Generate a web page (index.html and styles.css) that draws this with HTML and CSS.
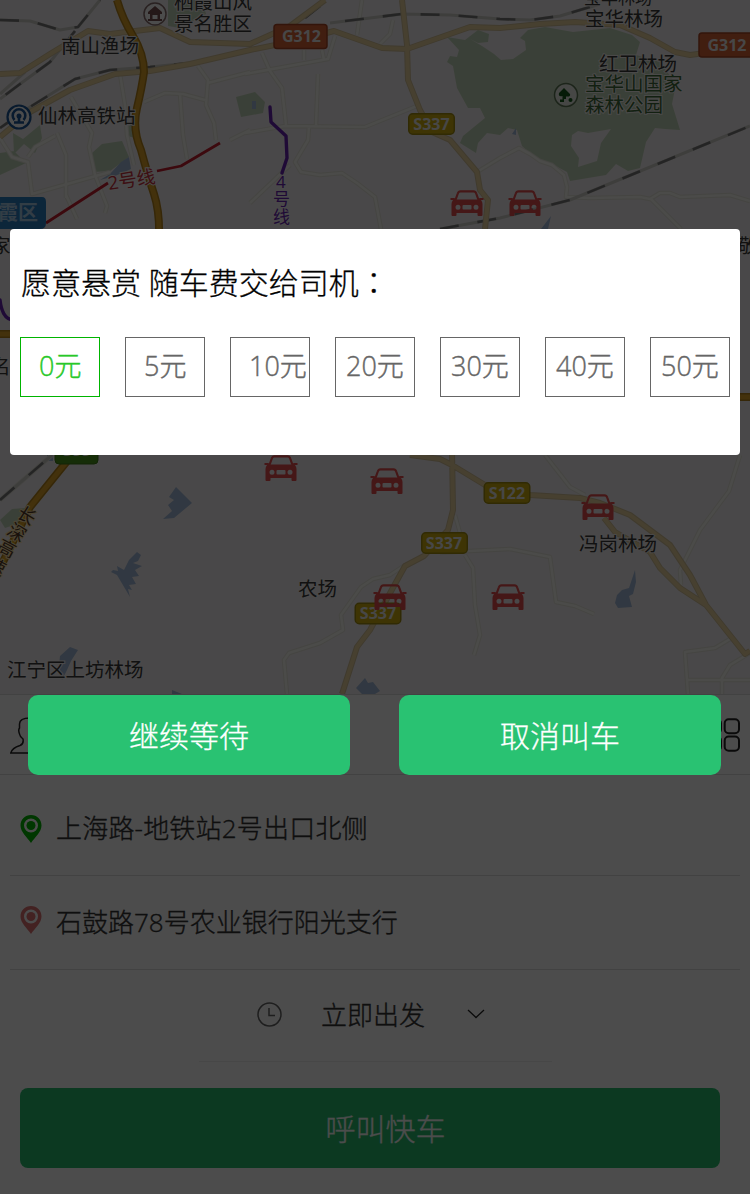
FILE: index.html
```html
<!DOCTYPE html>
<html lang="zh-CN">
<head>
<meta charset="utf-8">
<title>呼叫快车</title>
<link rel="stylesheet" href="styles.css">
</head>
<body>
<div class="screen">
  <svg class="map" width="750" height="694" viewBox="0 0 750 694">
    <defs>
      <g id="car">
        <path d="M5 10 7.3 3.500Q8 1.300 10 1.300H23Q25 1.300 25.700 3.500L28 10" fill="none" stroke="#e84e4e" stroke-width="2.200"/>
        <path fill="#e84e4e" fill-rule="evenodd" d="M0 8H4L5 9.500H28L29 8H33V10H30.500Q32 12 32 14V25Q32 26 31 26H28Q27 26 27 25V23H6V25Q6 26 5 26H2Q1 26 1 25V14Q1 12 2.500 10H0ZM7.500 14.700A2.500 2.500 0 1 0 7.500 19.700A2.500 2.500 0 1 0 7.500 14.700ZM25.500 14.700A2.500 2.500 0 1 0 25.500 19.700A2.500 2.500 0 1 0 25.500 14.700ZM13 15H20Q21 15 21 16V18.500Q21 19.500 20 19.500H13Q12 19.500 12 18.500V16Q12 15 13 15Z"/>
      </g>
      <g id="s-shield"><rect x=".75" y=".75" width="45.500" height="20.500" rx="4" fill="#cfb010" stroke="#a08c10" stroke-width="1.500"/></g>
    </defs>
    <rect width="750" height="694" fill="#f6f1f3"/>

    <g class="green">
      <path d="M447 37 465 40 478 30 489 34 488 42 478 43 470 39 482 46 494 54 501 60 513 59 526 50 525 41 520 38 528 30 545 27 573 32 610 28 632 35 640 42 636 55 660 62 676 84 672 104 680 130 665 129 655 128 646 142 640 168 628 171 616 164 606 175 570 181 567 172 550 163 535 158 522 146 517 130 508 128 500 135 487 133 478 143 476 153 460 143 463 136 485 118 480 108 468 108 457 88 453 66 447 62 450 56 457 57 459 50Z"/>
      <path d="M92 153 102 144 122 141 129 157 110 171 93 172Z"/>
      <path d="M0 153 14 151 26 163 0 175ZM13 133 23 139 40 125 42 138 35 153 24 144 14 154ZM125 128 134 123 136 138 127 136ZM236 97 255 92 265 102 263 113 241 117ZM168 0H202L206 14 180 28 168 26Z"/>
      <path d="M0 520 12 509 25 508 20 523 5 528Z"/>
    </g>
    <path fill="#f6f1f3" d="M572 135 578 131 588 133 611 129 601 143 597 161 578 167 579 158 571 146Z"/>
    <g class="water">
      <path d="M100 180 110 174 121 162 129 157 131 169 115 176ZM541 229 551 216 548 229ZM512 134 516 128 516 135ZM252 101h4v8h-4z"/>
      <path d="M176 487 192 503 174 518 163 519 172 511 168 505 174 500 169 497Z"/>
      <path d="M137 552 141 555 138 561 133 563 142 566 135 570 139 576 132 577 136 584 129 585 132 590 128 589 130 597 117 575 111 572 113 570 118 571 117 566 124 570 129 560Z"/>
      <path d="M635 570 636 582 633 594 629 596 632 607 618 608 615 603 617 595 622 590 629 588Z"/>
      <path d="M70 647 78 650 71 661 67 670 62 680 59 665 60 656ZM172 690 182 694H172ZM356 688 365 678 368 683 373 682 380 691 375 694H362ZM47 455h6v6h-6z"/>
    </g>

    <g class="minor-case">
      <path d="M120 74 125 105 127 135 134 165M71 97 92 133 89 147 95 175 107 206 105 213M57 133 66 155 66 198M28 157 35 147 55 136M0 138 12 157 28 162 32 194 110 172M66 195 77 219M144 102 165 93 183 94 205 100M180 94 183 135 187 159M198 66 208 80 206 105 214 123 216 140M208 83 250 72M230 140 250 130M245 74 328 59 335 36M262 53 270 71 282 88 286 125M318 74 316 125M362 0 357 35M393 20 390 34 380 44M245 133 285 126 365 127 417 106M309 127 308 140 295 162 301 172 320 175 342 173 357 183 375 197 381 229M290 165 250 203M304 50V60M322 50 324 60M477 172 500 158 519 148 530 154 540 161 552 165 564 175 567 187 566 197 590 198 640 197 650 199 660 193 670 193 680 197 730 195 750 201M650 198 681 229"/>
      <path d="M545 455 570 487 585 495M740 455 729 491 700 530 680 570 681 585M455 515 462 540M440 553 470 551 510 549 550 557 556 602 575 606 594 614M465 555 473 568 475 605 480 635 474 655M405 565 390 575 373 579 361 587 341 615 343 630 320 643 289 653 284 660 287 694M730 639 715 648 685 652 688 694M688 680H750M750 653 730 665 722 678 722 694M0 500 52 455"/>
    </g>
    <g class="minor">
      <path d="M120 74 125 105 127 135 134 165M71 97 92 133 89 147 95 175 107 206 105 213M57 133 66 155 66 198M28 157 35 147 55 136M0 138 12 157 28 162 32 194 110 172M66 195 77 219M144 102 165 93 183 94 205 100M180 94 183 135 187 159M198 66 208 80 206 105 214 123 216 140M208 83 250 72M230 140 250 130M245 74 328 59 335 36M262 53 270 71 282 88 286 125M318 74 316 125M362 0 357 35M393 20 390 34 380 44M245 133 285 126 365 127 417 106M309 127 308 140 295 162 301 172 320 175 342 173 357 183 375 197 381 229M290 165 250 203M304 50V60M322 50 324 60M477 172 500 158 519 148 530 154 540 161 552 165 564 175 567 187 566 197 590 198 640 197 650 199 660 193 670 193 680 197 730 195 750 201M650 198 681 229"/>
      <path d="M545 455 570 487 585 495M740 455 729 491 700 530 680 570 681 585M455 515 462 540M440 553 470 551 510 549 550 557 556 602 575 606 594 614M465 555 473 568 475 605 480 635 474 655M405 565 390 575 373 579 361 587 341 615 343 630 320 643 289 653 284 660 287 694M730 639 715 648 685 652 688 694M688 680H750M750 653 730 665 722 678 722 694M0 500 52 455"/>
    </g>

    <g class="rail">
      <path d="M0 20 30 21 60 30 78 27 100 0M75 31 50 62 20 84 0 99M0 128 30 107 75 79 110 70 150 67 190 63M330 23 370 18 402 14 450 15 500 19 530 20 560 16 600 4M0 94 25 72M440 229 500 218 570 200 750 126M0 500 52 455"/>
    </g>
    <g class="rail-dash">
      <path d="M0 20 30 21 60 30 78 27 100 0M75 31 50 62 20 84 0 99M0 128 30 107 75 79 110 70 150 67 190 63M345 21 370 18 402 14 450 15 500 19 530 20 560 16 600 4M440 229 500 218 570 200 750 126M0 500 52 455M305 18 325 2"/>
    </g>

    <g class="road-case">
      <path d="M0 74 20 73 50 54 88 31 110 34 135 31 160 28 190 42 250 44 290 26 325 0M0 137 30 112 70 90 115 74 150 71 190 64 250 50 300 40 334 31 382 48 407 49 470 27 500 28 540 24 575 22 620 25 650 38 675 52 690 55 705 53M402 0 407 45 408 80 420 110 432 132 450 140 477 172 480 190 488 200 485 229"/>
      <path d="M410 455 440 459 452 465 485 485 530 495 580 498 600 503 630 515 670 545 690 575 706 605 745 654 750 651M604 518 615 532 650 552 660 568 680 588 706 605M452 450 453 510 448 530 424 556 405 566 395 584 370 630 357 647 342 694"/>
    </g>
    <g class="road">
      <path d="M0 74 20 73 50 54 88 31 110 34 135 31 160 28 190 42 250 44 290 26 325 0M0 137 30 112 70 90 115 74 150 71 190 64 250 50 300 40 334 31 382 48 407 49 470 27 500 28 540 24 575 22 620 25 650 38 675 52 690 55 705 53M402 0 407 45 408 80 420 110 432 132 450 140 477 172 480 190 488 200 485 229"/>
      <path d="M410 455 440 459 452 465 485 485 530 495 580 498 600 503 630 515 670 545 690 575 706 605 745 654 750 651M604 518 615 532 650 552 660 568 680 588 706 605M452 450 453 510 448 530 424 556 405 566 395 584 370 630 357 647 342 694"/>
    </g>
    <g class="highway-case"><path d="M117 0Q122 18 133 36T144 72Q142 87 137 108T141 150Q148 176 154 194T159 240M68 460 30 507 0 568M0 334H12M738 397H750"/></g>
    <g class="highway"><path d="M117 0Q122 18 133 36T144 72Q142 87 137 108T141 150Q148 176 154 194T159 240M68 460 30 507 0 568M0 334H12M738 397H750"/></g>

    <path class="metro-red" d="M46 223 108 183M157 171 181 166 220 143"/>
    <path class="metro-purple" d="M270 107 271 122 286 136 287 158 282 173M0 300Q2 318 12 320"/>

    <g class="label">
      <text x="174" y="9">栖霞山风</text>
      <text x="174" y="31">景名胜区</text>
      <text x="61" y="53">南山渔场</text>
      <text x="38" y="123">仙林高铁站</text>
      <text x="584" y="4" font-size="17">宝华林场</text>
      <text x="585" y="26">宝华林场</text>
      <text x="599" y="71">红卫林场</text>
      <text x="579" y="551">冯岗林场</text>
      <text x="298" y="596">农场</text>
      <text x="7" y="677">江宁区上坊林场</text>
      <text x="-9" y="374">名</text>
      <text x="-9" y="253">家</text>
      <text x="738" y="253">敬</text>
    </g>
    <g class="label label-green">
      <text x="585" y="91">宝华山国家</text>
      <text x="585" y="112">森林公园</text>
    </g>
    <text class="label label-red" transform="translate(109 190) rotate(-9)">2号线</text>
    <g class="label label-purple">
      <text x="276" y="188">4</text>
      <text x="273" y="205">号</text>
      <text x="273" y="223">线</text>
    </g>
    <g class="label label-road">
      <text transform="translate(27 515) rotate(32)" x="-9" y="7">长</text>
      <text transform="translate(17 532) rotate(32)" x="-9" y="7">深</text>
      <text transform="translate(7 548) rotate(28)" x="-9" y="7">高</text>
      <text transform="translate(-3 566) rotate(28)" x="-9" y="7">速</text>
    </g>

    <g>
      <circle cx="155" cy="14" r="11" fill="#fff" stroke="#8a7070" stroke-width="1.500"/>
      <path fill="#7a5050" d="M148 12 155 6 162 12V14H160V19H162V21H148V19H150V14H148ZM152.500 15V19H157.500V15Z" fill-rule="evenodd"/>
      <circle cx="566" cy="95" r="11.500" fill="#e9efe6" stroke="#5f7a58" stroke-width="1.500"/>
      <path fill="#175c1c" d="M564 88 570 94Q571 97 566 96.500V99H564V102H560V99.500H562.500V96Q558 97 559 93Z"/>
      <circle cx="570.500" cy="100" r="2" fill="#175c1c"/>
      <circle cx="19" cy="117" r="11.500" fill="#fff" stroke="#1c5799" stroke-width="2.200"/>
      <path d="M14 122.500H24M19 122V117M14.500 120A6.300 6.300 0 1 1 23.500 120" fill="none" stroke="#1c5799" stroke-width="2.600"/>
      <circle cx="19" cy="116" r="2.500" fill="#1c5799"/>
    </g>

    <path d="M0 197H42Q46 197 46 202V223Q46 229 40 229H0Z" fill="#2b7fc4"/>
    <text class="district" x="-2" y="220">霞区</text>

    <g class="shield-text">
      <g fill="#d96438" stroke="#ab4826" stroke-width="1.500"><rect x="274" y="24.500" width="53" height="24" rx="3"/><rect x="699" y="33" width="56" height="24" rx="3"/></g>
      <text x="301.500" y="42">G312</text>
      <text x="727" y="50.500">G312</text>
      <use href="#s-shield" x="408" y="113"/><text x="431.500" y="129.500">S337</text>
      <use href="#s-shield" x="483.500" y="482"/><text x="507" y="498.500">S122</text>
      <use href="#s-shield" x="421" y="532"/><text x="444" y="548.500">S337</text>
      <use href="#s-shield" x="354.500" y="602.500"/><text x="378" y="619">S337</text>
      <rect x="55" y="440" width="43" height="24" rx="4" fill="#4b961c" stroke="#3d7a18"/><text x="76.500" y="456">S88</text>
    </g>

    <use href="#car" x="450.500" y="190"/><use href="#car" x="508.500" y="190"/>
    <use href="#car" x="264.500" y="455"/><use href="#car" x="370.500" y="468"/>
    <use href="#car" x="581.500" y="494"/><use href="#car" x="373.500" y="584"/>
    <use href="#car" x="491.500" y="584"/>
  </svg>

  <div class="panel">
    <div class="toolbar">
      <svg width="40" height="37" viewBox="0 0 40 37" fill="none" stroke="#222" stroke-width="1.500"><path d="M20 1C14 1 9.500 2 9.500 7V11Q8 13 9.500 17Q10 20 13 22Q14 27 10 28.500Q2 31 .8 36H39Q38 31 30 28.500Q26 27 27 22Q30 20 30.500 17Q32 13 30.500 11V7C30.500 2 26 1 20 1Z"/></svg>
      <svg width="34" height="34" viewBox="0 0 34 34" fill="none" stroke="#222" stroke-width="2"><rect x="1" y="1.200" width="14" height="14" rx="4"/><rect x="18.700" y="1.200" width="14.300" height="14" rx="4"/><rect x="1" y="18.500" width="14" height="14.300" rx="4"/><rect x="18.700" y="18.500" width="14.300" height="14.300" rx="4"/></svg>
    </div>
    <div class="place place-from">
      <svg class="pin" width="22" height="28" viewBox="0 0 22 28"><path fill="#00b800" fill-rule="evenodd" d="M11 0C17 0 21.500 4.500 21.500 10.500C21.500 17 15 22 11 28C7 22 .5 17 .5 10.500C.5 4.500 5 0 11 0ZM11 3.500A7 7 0 1 0 11 17.500A7 7 0 1 0 11 3.500Z"/><circle cx="11" cy="10.500" r="4.500" fill="#00b800"/></svg>
      <span>上海路-地铁站2号出口北侧</span>
    </div>
    <div class="place place-to">
      <svg class="pin" width="22" height="28" viewBox="0 0 22 28"><path fill="#e07474" fill-rule="evenodd" d="M11 0C17 0 21.500 4.500 21.500 10.500C21.500 17 15 22 11 28C7 22 .5 17 .5 10.500C.5 4.500 5 0 11 0ZM11 3.500A7 7 0 1 0 11 17.500A7 7 0 1 0 11 3.500Z"/><circle cx="11" cy="10.500" r="4.500" fill="#e07474"/></svg>
      <span>石鼓路78号农业银行阳光支行</span>
    </div>
    <div class="depart">
      <svg width="25" height="25" viewBox="0 0 25 25" fill="none" stroke="#666" stroke-width="1.500"><circle cx="12.500" cy="12.500" r="11.500"/><path d="M12 6V13.500H18"/></svg>
      <span>立即出发</span>
      <svg width="18" height="10" viewBox="0 0 18 10" fill="none" stroke="#222" stroke-width="1.300"><path d="M1 1 9 8.500 17 1"/></svg>
    </div>
    <div class="call">呼叫快车</div>
  </div>

  <div class="mask">
    <div class="dialog">
      <div class="title">愿意悬赏 随车费交给司机<span class="colon" lang="zh-TW">：</span></div>
      <div class="amounts">
        <div class="amount wide selected">0元</div>
        <div class="amount wide">5元</div>
        <div class="amount wide">10元</div>
        <div class="amount">20元</div>
        <div class="amount">30元</div>
        <div class="amount">40元</div>
        <div class="amount">50元</div>
      </div>
    </div>
    <div class="actions">
      <div class="action">继续等待</div>
      <div class="action">取消叫车</div>
    </div>
  </div>
</div>
</body>
</html>
```
FILE: styles.css
```css
* { box-sizing: border-box; }
body {
  margin: 0;
  font-family: "Open Sans", "Noto Sans CJK SC", sans-serif;
  font-weight: 300;
}
.screen {
  position: relative;
  width: 750px;
  height: 1194px;
  overflow: hidden;
  background: #fff;
}
.map { display: block; }

.map path { stroke-linejoin: round; }
.green { fill: #c3d8bb; }
.water { fill: #a4bddc; }
.minor-case, .minor, .rail, .rail-dash, .road-case, .road,
.highway-case, .highway, .metro-red, .metro-purple { fill: none; }
.minor-case { stroke: #e6e6dc; stroke-width: 4.5; }
.minor { stroke: #fafaf4; stroke-width: 2.6; }
.rail { stroke: #cfcfca; stroke-width: 3; }
.rail-dash { stroke: #7b7b7b; stroke-width: 2.6; stroke-dasharray: 19 19; }
.road-case { stroke: #d5c39a; stroke-width: 6; }
.road { stroke: #eed8a2; stroke-width: 4; }
.highway-case { stroke: #b5841c; stroke-width: 8; }
.highway { stroke: #e0a62a; stroke-width: 5; }
.metro-red { stroke: #c81e30; stroke-width: 2.8; }
.metro-purple { stroke: #6a24b4; stroke-width: 3.4; stroke-linecap: round; }

.label {
  font-size: 19.5px;
  font-weight: 400;
  fill: #3a3a3a;
  stroke: #f8f5f4;
  stroke-width: 2px;
  paint-order: stroke;
}
.label-green { fill: #3e6b3a; }
.label-red { fill: #cc3340; font-size: 18.5px; }
.label-purple { fill: #6a24b4; font-size: 17px; }
.label-road { fill: #553b2a; font-size: 18px; stroke: #ffe6ad; }
.district { font-size: 20px; font-weight: 700; fill: #a9cbe8; }
.shield-text { font-size: 16px; font-weight: 700; text-anchor: middle; }
.shield-text text { fill: #eee; }

.panel { height: 500px; background: #fff; }
.toolbar {
  display: flex;
  justify-content: space-between;
  align-items: center;
  height: 81px;
  padding: 1px 10px 0;
  border-top: 1px solid #ddd;
  border-bottom: 1px solid #ddd;
}
.place {
  display: flex;
  align-items: center;
  gap: 14px;
  margin: 0 10px;
  padding-left: 10px;
  border-bottom: 1px solid #ddd;
  color: #333;
  font-size: 26px;
  -webkit-text-stroke: .35px;
}
.place-from { height: 101px; letter-spacing: .2px; }
.place-from .pin { margin-top: 8px; }
.place-from span { margin-top: 4px; }
.place-to { height: 94px; }
.place-to .pin { margin-top: -5px; }
.place-to span { margin-top: -3px; }
.depart {
  display: flex;
  align-items: center;
  width: 353px;
  height: 92px;
  margin-left: 199px;
  padding: 0 0 3px 58px;
  border-bottom: 1px solid #eee;
  color: #333;
  font-size: 26px;
  -webkit-text-stroke: .35px;
}
.depart span { margin: 0 42px 0 39px; }
.call {
  height: 80px;
  margin: 26px 30px 0 20px;
  padding-left: 31px;
  border-radius: 8px;
  background: #29c071;
  color: #fff;
  font-size: 30px;
  line-height: 81px;
  text-align: center;
  -webkit-text-stroke: .3px;
}

.mask {
  position: absolute;
  inset: 0;
  padding: 229px 10px 0;
  background: rgba(0, 0, 0, .7);
}
.dialog {
  height: 226px;
  padding: 28px 11px 0 10px;
  padding-right: 10px;
  border-radius: 4px;
  background: #fff;
}
.title {
  height: 80px;
  padding-left: 1px;
  color: #000;
  font-size: 30px;
  line-height: 49px;
  -webkit-text-stroke: .3px;
}
.colon { font-family: "Noto Sans CJK TC", sans-serif; }
.amounts { display: flex; justify-content: space-between; }
.amount {
  width: 80px;
  height: 60px;
  padding-left: 10px;
  border: 1px solid #666;
  color: #666;
  font-size: 27px;
  line-height: 56px;
  white-space: nowrap;
  -webkit-text-stroke: .4px;
}
.wide { padding-left: 18px; }
.selected { border-color: #00b400; color: #28c828; }
.actions {
  display: flex;
  justify-content: space-between;
  margin: 240px 19px 0 18px;
  padding-right: 0;
  margin-right: 9px;
  gap: 49px;
  justify-content: flex-start;
}
.action {
  width: 322px;
  height: 80px;
  border-radius: 10px;
  background: #29c272;
  color: #fff;
  font-size: 30px;
  line-height: 81px;
  text-align: center;
  -webkit-text-stroke: .3px;
}
```
